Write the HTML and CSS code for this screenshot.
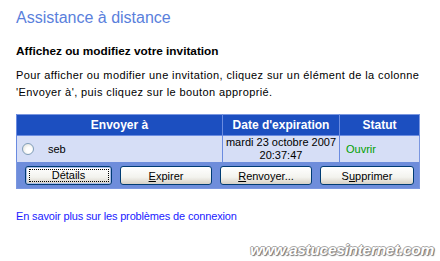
FILE: index.html
```html
<!DOCTYPE html>
<html lang="fr">
<head>
<meta charset="utf-8">
<title>Assistance à distance</title>
<link rel="stylesheet" href="styles.css">
</head>
<body>
<div class="page">
  <h1 class="title">Assistance à distance</h1>
  <h2 class="subtitle">Affichez ou modifiez votre invitation</h2>
  <p class="intro">Pour afficher ou modifier une invitation, cliquez sur un élément de la colonne 'Envoyer à', puis cliquez sur le bouton approprié.</p>
  <table class="inv">
    <colgroup>
      <col class="c1">
      <col class="c2">
      <col class="c3">
    </colgroup>
    <thead>
      <tr>
        <th>Envoyer à</th>
        <th>Date d'expiration</th>
        <th>Statut</th>
      </tr>
    </thead>
    <tbody>
      <tr class="row">
        <td><span class="name"><span class="radio"></span>seb</span></td>
        <td class="date">mardi 23 octobre 2007<br>20:37:47</td>
        <td class="status">Ouvrir</td>
      </tr>
      <tr class="actions">
        <td colspan="3">
          <div class="buttons">
            <button class="btn default"><span class="focus">Détails</span></button>
            <button class="btn wide"><u>E</u>xpirer</button>
            <button class="btn wide"><u>R</u>envoyer...</button>
            <button class="btn wider">S<u>u</u>pprimer</button>
          </div>
        </td>
      </tr>
    </tbody>
  </table>
  <p class="more"><a href="#">En savoir plus sur les problèmes de connexion</a></p>
  <div class="mark">www.astucesinternet.com</div>
</div>
</body>
</html>
```

FILE: styles.css
```css
html, body {
  margin: 0;
  padding: 0;
  background: #ffffff;
}
.page {
  width: 440px;
  height: 261px;
  padding: 6px 0 0 16px;
  box-sizing: border-box;
  font-family: "Liberation Sans", Arial, sans-serif;
  font-size: 11px;
  color: #000;
}
.title {
  margin: 0;
  font-size: 16px;
  line-height: 24px;
  font-weight: normal;
  color: #5a7fdc;
}
.subtitle {
  margin: 14px 0 0 0;
  font-size: 11.8px;
  line-height: 14px;
  font-weight: bold;
}
.intro {
  margin: 9px 0 0 0;
  line-height: 17px;
  width: 420px;
  letter-spacing: 0.4px;
}
.inv {
  margin-top: 13px;
  border-collapse: collapse;
  table-layout: fixed;
  width: 403px;
  border: 1px solid #7b97e0;
}
.inv col.c1 { width: 206px; }
.inv col.c2 { width: 117px; }
.inv col.c3 { width: 80px; }
.inv th {
  background: #1c4fc0;
  color: #fff;
  font-weight: bold;
  font-size: 12px;
  height: 20px;
  padding: 0;
  text-align: center;
  border-left: 1px solid #6a8be0;
}
.row td {
  background: #d6def6;
  height: 25px;
  padding: 0;
  border-left: 1px solid #6a8be0;
  border-top: 1px solid #6a8be0;
}
.name {
  display: flex;
  align-items: center;
  padding-left: 5px;
  gap: 14px;
}
.radio {
  width: 10px;
  height: 10px;
  border-radius: 50%;
  border: 1px solid #7f9db9;
  background: radial-gradient(circle at 60% 60%, #ffffff 30%, #dcdcd4 100%);
}
.date {
  text-align: center;
  line-height: 13px;
}
.row .status {
  color: #00a000;
  padding-left: 6px;
}
.actions td {
  background: #6e8ddb;
  padding: 0;
  height: 26px;
}
.buttons {
  display: flex;
  gap: 8px;
  padding: 4px 0 3px 8px;
}
.btn {
  height: 19px;
  width: 87px;
  padding: 0;
  font-family: "Liberation Sans", Arial, sans-serif;
  font-size: 11px;
  color: #000;
  border: 1px solid #003c74;
  border-radius: 3px;
  background: linear-gradient(#ffffff, #f3f3ee 60%, #d6d0c5);
  display: flex;
  align-items: center;
  justify-content: center;
}
.btn.wide { width: 92px; }
.btn.wider { width: 94px; }
.btn.default {
  box-shadow: inset 0 0 0 1px #aabde8;
}
.focus {
  display: block;
  width: 78px;
  border: 1px dotted #000;
  line-height: 11px;
  text-align: center;
}
.more {
  margin: 20px 0 0 0;
  line-height: 14px;
  letter-spacing: -0.15px;
}
.more a {
  color: #1a1aff;
  text-decoration: none;
}
.mark {
  margin: 18px 6px 0 0;
  text-align: right;
  font-family: "Liberation Sans", Arial, sans-serif;
  font-size: 15.5px;
  font-weight: bold;
  font-style: italic;
  color: #ffffff;
  text-shadow: 1px 1px 1px #777, -1px 0 0 #aaa, 0 -1px 0 #aaa, 1px 0 0 #999;
  letter-spacing: -0.3px;
}
```
